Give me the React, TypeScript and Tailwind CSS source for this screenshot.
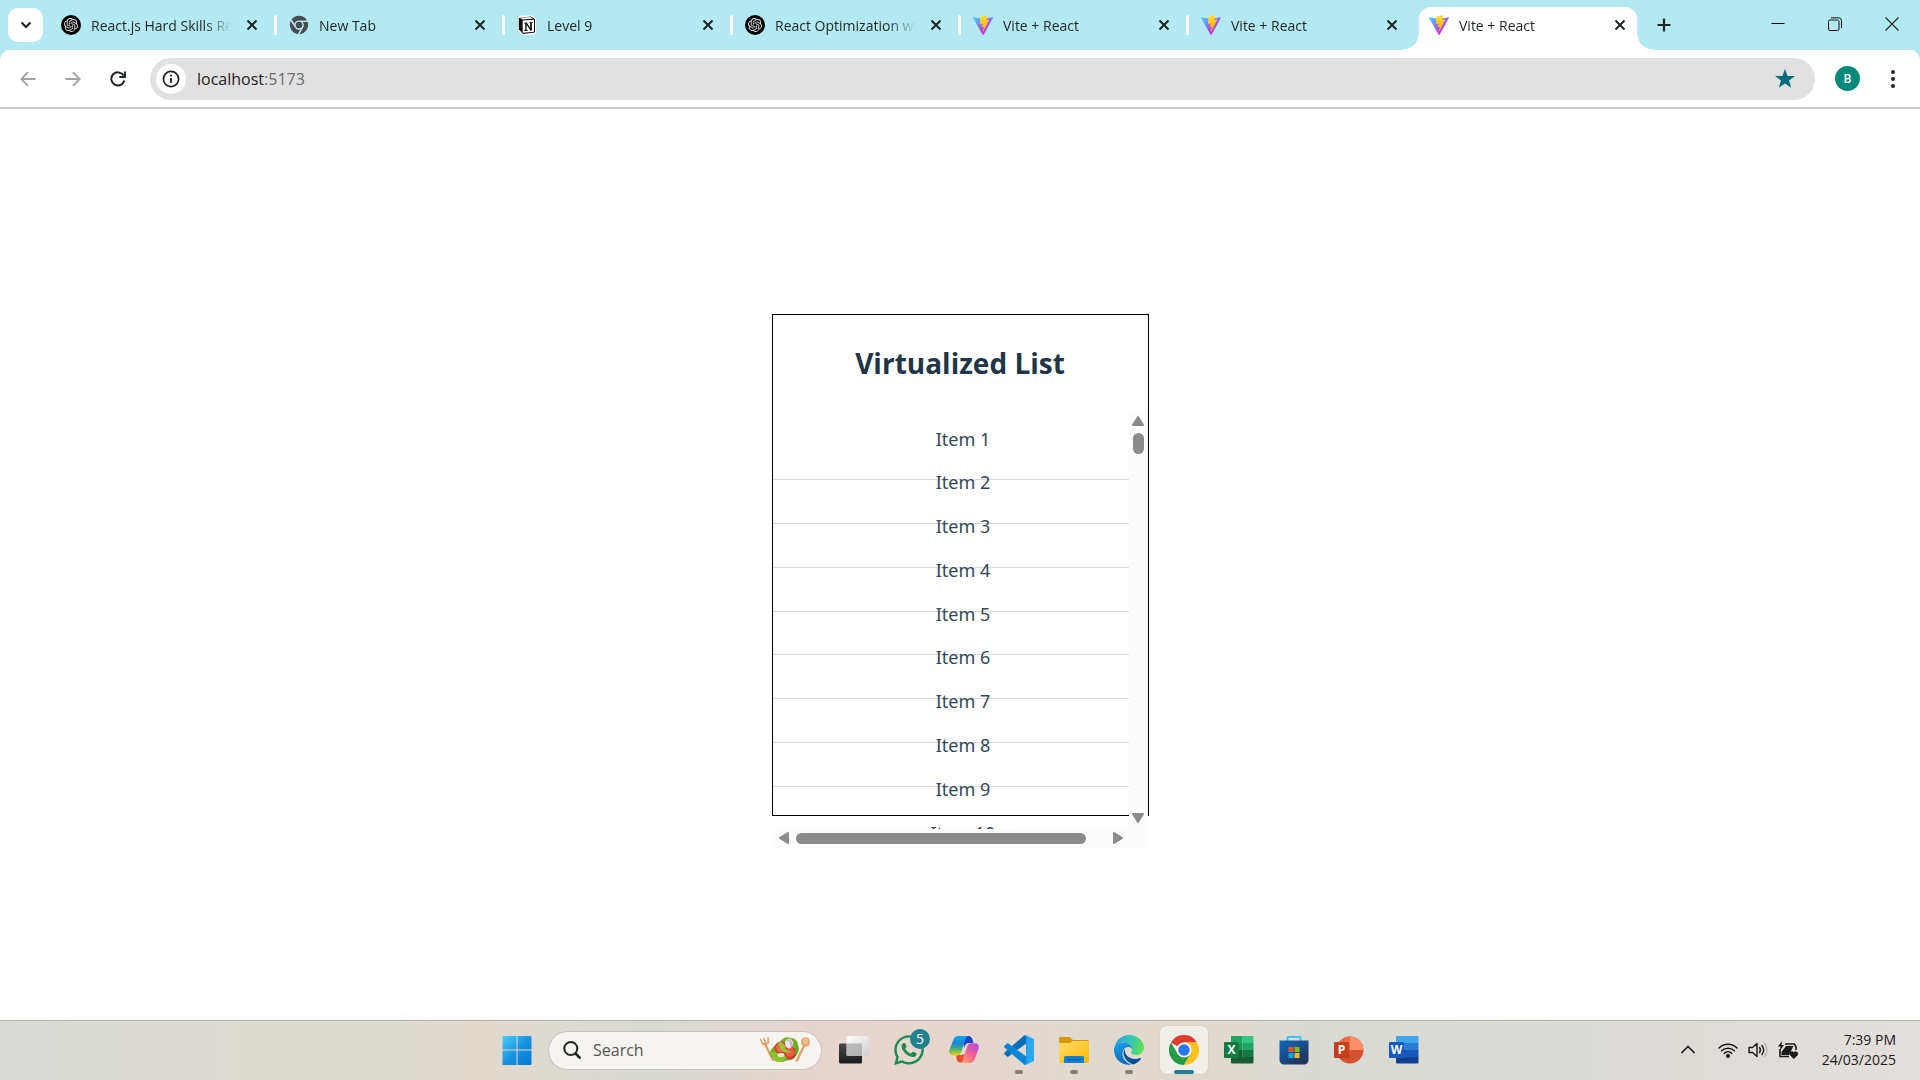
import React, { useId, type ReactNode } from "react";
import { SiOpenai } from "react-icons/si";
import { FaWhatsapp } from "react-icons/fa";

/* ---------- Favicons ---------- */

function ViteIcon() {
  const id = useId();
  return (
    <svg viewBox="0 0 256 257" className="size-5" aria-hidden="true">
      <defs>
        <linearGradient id={`${id}a`} x1="-.828%" x2="57.636%" y1="7.652%" y2="78.411%">
          <stop offset="0%" stopColor="#41D1FF" />
          <stop offset="100%" stopColor="#BD34FE" />
        </linearGradient>
        <linearGradient id={`${id}b`} x1="43.376%" x2="50.316%" y1="2.242%" y2="89.03%">
          <stop offset="0%" stopColor="#FFEA83" />
          <stop offset="8.333%" stopColor="#FFDD35" />
          <stop offset="100%" stopColor="#FFA800" />
        </linearGradient>
      </defs>
      <path
        fill={`url(#${id}a)`}
        d="M255.153 37.938L134.897 252.976c-2.483 4.44-8.862 4.466-11.382.048L.875 37.958c-2.746-4.814 1.371-10.646 6.827-9.67l120.385 21.517a6.537 6.537 0 0 0 2.322-.004l117.867-21.483c5.438-.991 9.574 4.796 6.877 9.62Z"
      />
      <path
        fill={`url(#${id}b)`}
        d="M185.432.063L96.44 17.501a3.268 3.268 0 0 0-2.634 3.014l-5.474 92.456a3.268 3.268 0 0 0 3.997 3.378l24.777-5.718c2.318-.535 4.413 1.507 3.936 3.838l-7.361 36.047c-.495 2.426 1.782 4.5 4.151 3.78l15.304-4.649c2.372-.72 4.652 1.36 4.15 3.788l-11.698 56.621c-.732 3.542 3.979 5.473 5.943 2.437l1.313-2.028l72.516-144.72c1.215-2.423-.88-5.186-3.54-4.672l-25.505 4.922c-2.396.462-4.435-1.77-3.759-4.114l16.646-57.705c.677-2.35-1.37-4.583-3.769-4.113Z"
      />
    </svg>
  );
}

function ChatIcon() {
  return (
    <span className="flex size-5 items-center justify-center rounded-full bg-black text-[#e4e4e4]">
      <SiOpenai className="size-3.5" aria-hidden="true" />
    </span>
  );
}

function ChromeGreyIcon() {
  return (
    <svg viewBox="0 0 20 20" className="size-5" aria-hidden="true">
      <g fill="#474c50">
        <circle cx="10" cy="10" r="3.3" />
        <path d="M2.6 4.3A9.2 9.2 0 0 1 18 5.4H10A4.7 4.7 0 0 0 5.5 8.8Z" />
        <path d="M1.7 6A9.2 9.2 0 0 0 8.8 19L11.3 14.6A4.7 4.7 0 0 1 5.9 12.4Z" />
        <path d="M18.6 7A9.2 9.2 0 0 1 10.5 19.2L14.2 12.4A4.7 4.7 0 0 0 13.6 7Z" />
      </g>
    </svg>
  );
}

function NotionIcon() {
  return (
    <svg viewBox="0 0 20 20" className="size-5" aria-hidden="true">
      <path d="M1 2.6 3 .8 14.5.2 19 3.4V18l-1.6 1.4L5.3 19.9 1 15.2Z" fill="#fff" />
      <path d="M1.8 3 13.6 1.6l4.4 2.5v13.5l-12 1.3-4.2-4.6Z" fill="#111" />
      <path d="M3.1 2.9 13.3 2.1l2.7 1.5-10.1.9Z" fill="#fff" />
      <path d="M5.7 5.6 17 4.7v12L5.7 17.8Z" fill="#fff" />
      <path d="M7.2 7.5h2.6l3.4 5.4V8.3l-1-.3v-.8h3.6V8l-.9.3v7.3l-1.4.1-3.9-6v5.1l1.1.3v.8H7.3V15l.9-.3V8.6l-1-.3Z" fill="#111" />
    </svg>
  );
}

/* ---------- Browser chrome ---------- */

type Tab = { title: string; icon: ReactNode; active?: boolean };

const tabs: Tab[] = [
  { title: "React.js Hard Skills Review", icon: <ChatIcon /> },
  { title: "New Tab", icon: <ChromeGreyIcon /> },
  { title: "Level 9", icon: <NotionIcon /> },
  { title: "React Optimization with lists", icon: <ChatIcon /> },
  { title: "Vite + React", icon: <ViteIcon /> },
  { title: "Vite + React", icon: <ViteIcon /> },
  { title: "Vite + React", icon: <ViteIcon />, active: true },
];

function BrowserTab({ tab, first }: { tab: Tab; first: boolean }) {
  return (
    <div className="relative flex min-w-0 max-w-[228px] flex-1 items-center pr-3">
      {tab.active && (
        <span className="absolute inset-x-[5px] top-[7px] bottom-0 rounded-t-xl bg-white before:absolute before:bottom-0 before:-left-4 before:size-4 before:bg-[radial-gradient(circle_at_0_0,transparent_15px,white_16px)] after:absolute after:-right-4 after:bottom-0 after:size-4 after:bg-[radial-gradient(circle_at_100%_0,transparent_15px,white_16px)]" />
      )}
      <span className={tab.active || first ? "h-5 w-[3px]" : "h-5 w-[3px] rounded-full bg-white"} />
      <button role="tab" aria-selected={!!tab.active} className="relative flex min-w-0 flex-1 items-center gap-2.5 pl-3 text-left">
        <span className="shrink-0">{tab.icon}</span>
        <span className="min-w-0 flex-1 overflow-hidden mask-r-from-80% pt-0.5 text-sm leading-5 whitespace-nowrap text-[#1f2426]">
          {tab.title}
        </span>
      </button>
      <button aria-label={`Close ${tab.title}`} className="relative ml-2.5 flex size-5 items-center justify-center">
        <svg viewBox="0 0 12 12" className="size-3" aria-hidden="true">
          <path d="M1.5 1.5 10.5 10.5M10.5 1.5 1.5 10.5" stroke="#1f2426" strokeWidth="2" />
        </svg>
      </button>
    </div>
  );
}

function TabStrip() {
  return (
    <div className="flex h-[50px]">
      <button aria-label="Search tabs" className="mt-2 mr-[3px] ml-2 flex h-[34px] w-[35px] shrink-0 items-center justify-center rounded-[10px] bg-white">
        <svg viewBox="0 0 12 8" className="h-2 w-3" fill="none" aria-hidden="true">
          <path d="m1.5 1.5 4.5 4.5 4.5-4.5" stroke="#1f2426" strokeWidth="2.2" />
        </svg>
      </button>
      <div role="tablist" className="flex min-w-0 flex-[0_1_1596px]">
        {tabs.map((tab, i) => (
          <BrowserTab key={i} tab={tab} first={i === 0} />
        ))}
      </div>
      <button aria-label="New tab" className="ml-[5px] flex w-[34px] items-center justify-center">
        <svg viewBox="0 0 14 14" className="size-3.5" aria-hidden="true">
          <path d="M7 .5v13M.5 7h13" stroke="#1f2426" strokeWidth="2.2" />
        </svg>
      </button>
      <div className="ml-auto flex shrink-0 pb-0.5">
        <button aria-label="Minimize" className="flex w-[57px] items-center justify-center">
          <svg viewBox="0 0 14 14" className="size-3.5" aria-hidden="true">
            <path d="M.5 6.5h13" stroke="#000" />
          </svg>
        </button>
        <button aria-label="Restore" className="flex w-[57px] items-center justify-center">
          <svg viewBox="0 0 14 14" className="size-3.5" fill="none" stroke="#111" aria-hidden="true">
            <rect x=".5" y="3" width="10.5" height="10.5" rx="1.5" />
            <path d="M3 .8h7.5a3 3 0 0 1 3 3V11" />
          </svg>
        </button>
        <button aria-label="Close window" className="flex w-[57px] items-center justify-center">
          <svg viewBox="0 0 14 14" className="size-3.5" aria-hidden="true">
            <path d="m.5.5 13 13m0-13-13 13" stroke="#222" strokeWidth="1.1" />
          </svg>
        </button>
      </div>
    </div>
  );
}

function Toolbar() {
  return (
    <div className="flex h-[59px] items-center rounded-t-[10px] border-b-2 border-[#cacaca] bg-white pl-2.5">
      <div className="mr-[15px] flex gap-2.5">
        <button aria-label="Back" className="flex size-[35px] items-center justify-center">
          <svg viewBox="0 0 16 16" className="size-4" fill="none" stroke="#a0a2a3" strokeWidth="1.8" aria-hidden="true">
            <path d="M15.5 8H1.5M8 1.2 1.3 8 8 14.8" />
          </svg>
        </button>
        <button aria-label="Forward" className="flex size-[35px] items-center justify-center">
          <svg viewBox="0 0 16 16" className="size-4" fill="none" stroke="#a0a2a3" strokeWidth="1.8" aria-hidden="true">
            <path d="M.5 8h14M8 1.2 14.7 8 8 14.8" />
          </svg>
        </button>
        <button aria-label="Reload" className="flex size-[35px] items-center justify-center">
          <svg viewBox="0 0 16 16" className="size-4" fill="none" stroke="#1f2426" strokeWidth="2" aria-hidden="true">
            <path d="M14.3 9.6A6.6 6.6 0 1 1 13.6 4.6" />
            <path d="M14.9.5v5.6H9.3" />
          </svg>
        </button>
      </div>
      <div className="flex h-[42px] min-w-0 flex-1 items-center rounded-full bg-[#e1e1e1] pr-5 pl-1.5">
        <button aria-label="View site information" className="flex size-[30px] shrink-0 items-center justify-center rounded-full bg-white">
          <svg viewBox="0 0 18 18" className="size-[18px]" aria-hidden="true">
            <circle cx="9" cy="9" r="7.6" fill="none" stroke="#1f2426" strokeWidth="1.7" />
            <path d="M9 8v5M9 4.8v1.8" stroke="#1f2426" strokeWidth="1.8" />
          </svg>
        </button>
        <span className="ml-[11px] flex-1 text-base leading-6 text-[#1f2022]">
          localhost<span className="text-[#6a6c6e]">:5173</span>
        </span>
        <button aria-label="Edit bookmark">
          <svg viewBox="0 0 20 19" className="h-[19px] w-5" aria-hidden="true">
            <path d="m10 0 2.5 6.9 7.5.2-6 4.5 2.2 7.2L10 14.6l-6.200 4.200L6 11.600 0 7.100l7.500-.2Z" fill="#006c7c" />
          </svg>
        </button>
      </div>
      <button aria-label="Profile B" className="ml-5 flex size-[25px] items-center justify-center rounded-full bg-[#00897b] font-['Roboto',sans-serif] text-xs font-medium text-white">
        B
      </button>
      <button aria-label="Menu" className="mr-2.5 ml-[15px] flex size-[35px] items-center justify-center">
        <svg viewBox="0 0 4 18" className="h-[18px] w-1" fill="#1f2426" aria-hidden="true">
          <circle cx="2" cy="2" r="2" />
          <circle cx="2" cy="9" r="2" />
          <circle cx="2" cy="16" r="2" />
        </svg>
      </button>
    </div>
  );
}

/* ---------- Page ---------- */

const items = Array.from({ length: 10 }, (_, i) => `Item ${i + 1}`);

function VirtualizedList() {
  return (
    <section className="h-[502px] w-[377px] border border-black">
      <h1 className="flex h-[95px] items-center justify-center pt-0.5 text-[28px] leading-9 font-bold text-[#213547]">Virtualized List</h1>
      <div className="grid grid-cols-[1fr_19px] grid-rows-[419px_19px]">
        <div className="overflow-hidden pt-[27px]">
          <ul className="grid h-[438px] auto-rows-fr text-center font-['Noto_Sans',sans-serif] text-lg text-[#34475a]">
            {items.map((item) => (
              <li key={item} className="border-b border-[#d9dadb] pl-[25px] leading-[4px]">
                {item}
              </li>
            ))}
          </ul>
        </div>
        <div className="flex flex-col items-center bg-[#fcfcfc] py-1.5">
          <svg viewBox="0 0 12 10" className="h-2.5 w-3" aria-hidden="true">
            <path d="M5 .7a1.200 1.200 0 0 1 2 0l4.800 7.800a1 1 0 0 1-.8 1.500H1a1 1 0 0 1-.8-1.500Z" fill="#8b8b8b" />
          </svg>
          <div className="mt-[7px] h-[21px] w-[11px] rounded-full bg-[#8b8b8b]" />
          <svg viewBox="0 0 12 10" className="mt-auto h-2.5 w-3" aria-hidden="true">
            <path d="M5 9.300a1.200 1.200 0 0 0 2 0l4.800-7.800A1 1 0 0 0 11 0H1a1 1 0 0 0-.8 1.500Z" fill="#8b8b8b" />
          </svg>
        </div>
        <div className="flex items-center bg-[#fcfcfc] px-1.5">
          <svg viewBox="0 0 10 12" className="h-3 w-2.5" aria-hidden="true">
            <path d="M.7 5a1.200 1.200 0 0 0 0 2l7.800 4.800A1 1 0 0 0 10 11V1A1 1 0 0 0 8.500.2Z" fill="#8b8b8b" />
          </svg>
          <div className="ml-[7px] h-[11px] w-[290px] rounded-full bg-[#8b8b8b]" />
          <svg viewBox="0 0 10 12" className="ml-auto h-3 w-2.5" aria-hidden="true">
            <path d="M9.300 5a1.200 1.200 0 0 1 0 2l-7.800 4.800A1 1 0 0 1 0 11V1A1 1 0 0 1 1.500.2Z" fill="#8b8b8b" />
          </svg>
        </div>
        <div className="bg-[#fcfcfc]" />
      </div>
    </section>
  );
}

/* ---------- Taskbar ---------- */

function WindowsIcon() {
  return (
    <svg viewBox="0 0 30 30" className="size-[30px]" aria-hidden="true">
      <defs>
        <linearGradient id="win" x1="0" y1="0" x2="30" y2="30" gradientUnits="userSpaceOnUse">
          <stop offset="0" stopColor="#4fd0ff" />
          <stop offset=".5" stopColor="#1a94e0" />
          <stop offset="1" stopColor="#0078d4" />
        </linearGradient>
      </defs>
      <path d="M1.500 1H14.500V14.500H.5V2a1 1 0 0 1 1-1ZM15.500 1H28.500a1 1 0 0 1 1 1V14.500H15.500ZM.5 15.500H14.500V30H1.500a1 1 0 0 1-1-1ZM15.500 15.500H29.500V29a1 1 0 0 1-1 1H15.500Z" fill="url(#win)" />
    </svg>
  );
}

function SaladIcon() {
  return (
    <svg viewBox="0 0 52 28" className="h-7 w-[52px]" aria-hidden="true">
      <g stroke="#dda26c" strokeLinecap="round" fill="none">
        <path d="m6 8 8 16" strokeWidth="2.400" />
        <path d="M1.500 3.500 4 8.500M5 2.500l1.500 5M9 2l.5 5" strokeWidth="1.600" />
        <path d="m45 10-7 14.500" strokeWidth="2.400" />
      </g>
      <path d="M1.500 5.500c2 5 8 5 8 0L8 6.500 4.500 7Z" fill="#dda26c" />
      <ellipse cx="46.500" cy="6" rx="4.500" ry="4.800" fill="#e2aa74" />
      <ellipse cx="47" cy="5" rx="2.600" ry="2.800" fill="#eabf92" />
      <path d="M11 16c2-5 6-8 10-10 2-4 7-6 11-4 4 0 7 3 7 7 2 4 0 9-3 12-3 4-7 3-10 4-4 2-7 1-9-2-4-1-7-3-6-7Z" fill="#77ae25" />
      <circle cx="22" cy="12" r="6.500" fill="#d93f2c" />
      <circle cx="22" cy="11.500" r="4.800" fill="#f0684d" />
      <circle cx="31" cy="17" r="6.500" fill="#d33a29" />
      <circle cx="31" cy="16" r="4.600" fill="#ee5f45" />
      <path d="M20 6c3 0 5 2 6 5s3 5 7 4c-4 3-9 2-11-2s-3-5-2-7Z" fill="#96c93a" />
      <path d="M11 16c4-1 7 1 9 3s6 2 8 1c-2 4-5 6-9 6-3 0-4-2-5-4s-3-3-3-6Z" fill="#8cc230" />
      <ellipse cx="30" cy="7.500" rx="4" ry="5" fill="#efe4ef" />
      <path d="M28 4c3 0 4 3 4 7M30 3c2 2 3 4 3 7" stroke="#b78fb8" strokeWidth=".8" fill="none" />
      <path d="M36 6c3 3 4 9 1 14-2-2-1-5 0-7s0-5-1-7Z" fill="#6aa51d" />
      <ellipse cx="22" cy="19" rx="3.500" ry="2" fill="#e6efc5" />
    </svg>
  );
}

function TaskViewIcon() {
  return (
    <svg viewBox="0 0 30 30" className="size-[30px]" aria-hidden="true">
      <defs>
        <linearGradient id="tvd" x1="0" y1="0" x2="0" y2="1">
          <stop offset="0" stopColor="#484848" />
          <stop offset="1" stopColor="#1b1b1b" />
        </linearGradient>
        <linearGradient id="tvl" x1="0" y1="0" x2="1" y2="1">
          <stop offset="0" stopColor="#fff" />
          <stop offset="1" stopColor="#cfcfcf" />
        </linearGradient>
      </defs>
      <rect x="0" y="8.500" width="23" height="20" rx="1.500" fill="url(#tvd)" />
      <rect x="7.500" y="1" width="22.500" height="20" rx="1.500" fill="url(#tvl)" opacity=".95" />
      <path d="M7.500 8.500H23V21H9a1.500 1.500 0 0 1-1.500-1.500Z" fill="#a5a5a5" opacity=".7" />
    </svg>
  );
}

function CopilotIcon() {
  return (
    <svg viewBox="0 0 30 30" className="size-[30px]" aria-hidden="true">
      <defs>
        <linearGradient id="cpa" x1="0" y1="0" x2="0" y2="1">
          <stop offset="0" stopColor="#15a5ee" />
          <stop offset=".4" stopColor="#1785d8" />
          <stop offset=".7" stopColor="#59b463" />
          <stop offset="1" stopColor="#f2cf14" />
        </linearGradient>
        <linearGradient id="cpb" x1="1" y1="0" x2=".2" y2="1">
          <stop offset="0" stopColor="#a64ff0" />
          <stop offset=".5" stopColor="#ee5c98" />
          <stop offset="1" stopColor="#ffa268" />
        </linearGradient>
      </defs>
      <path d="M14 1h5.500a4 4 0 0 1 3.700 2.700L24.500 8H20c-3 0-4 2-5 5Z" fill="#1946cc" />
      <path d="M7 20h5l4-1-2 8.500h-2.500a4 4 0 0 1-3.800-2.800Z" fill="#ee4d2f" />
      <path d="M9.500 1H20c-2 0-3 1.500-3.700 3.500l-4 12.500c-.8 2.500-2 3.500-4.500 3.500H4c-3 0-4.500-2.500-3.700-5.500L4.500 4.500C5.300 2 7 1 9.500 1Z" fill="url(#cpa)" />
      <path d="M20.500 28H10.500c2 0 2.800-1.500 3.500-3.500L18 12c.8-2.500 2-3.800 4.500-3.800H26c3 0 4.500 2.300 3.700 5.300l-4.200 11C24.700 27 23 28 20.500 28Z" fill="url(#cpb)" />
    </svg>
  );
}

function VsCodeIcon() {
  return (
    <svg viewBox="0 0 30 30" className="size-[30px]" aria-hidden="true">
      <path d="M22 .3 29 3.500a1.800 1.800 0 0 1 1 1.600v19.800a1.800 1.800 0 0 1-1 1.600L22 29.700Z" fill="#2aa7f2" />
      <path d="M22 .3 22.500 8.300 4.500 21.500a1.200 1.200 0 0 1-1.500 0L.5 19.200a1.200 1.200 0 0 1 0-1.800L19.800.8Z" fill="#0a6fb8" />
      <path d="m22 29.700.5-8L4.500 8.500a1.200 1.200 0 0 0-1.500 0L.5 10.800a1.200 1.200 0 0 0 0 1.800L19.800 29.200Z" fill="#0c85d6" />
      <path d="M19.500.8C20.700-.3 22 .3 22 .3V29.700s-1.500.6-2.600-.5L22.500 28V2Z" fill="#1a96e6" />
    </svg>
  );
}

function FolderIcon() {
  return (
    <svg viewBox="0 0 30 30" className="size-[30px]" aria-hidden="true">
      <defs>
        <linearGradient id="fld" x1="0" y1="0" x2="1" y2="1">
          <stop offset="0" stopColor="#ffdc6b" />
          <stop offset="1" stopColor="#ffb900" />
        </linearGradient>
      </defs>
      <path d="M0 3.500A1.500 1.500 0 0 1 1.500 2H10c1 0 1.500.5 2 1.200L14 5H28.500A1.500 1.500 0 0 1 30 6.500V12H0Z" fill="#d69a0a" />
      <path d="M0 8h11l2.500-2H28.500A1.500 1.500 0 0 1 30 7.500v19a1.500 1.500 0 0 1-1.500 1.500h-27A1.500 1.500 0 0 1 0 26.500Z" fill="url(#fld)" />
      <path d="M5 28v-5.500A1.500 1.500 0 0 1 6.500 21h17a1.500 1.500 0 0 1 1.500 1.500V28Z" fill="#0f80d3" />
      <path d="M8 24.500h14" stroke="#0b5ea8" strokeWidth="1.500" />
    </svg>
  );
}

function EdgeIcon() {
  return (
    <svg viewBox="0 0 30 30" className="size-[30px]" aria-hidden="true">
      <defs>
        <linearGradient id="ega" x1="0" y1=".3" x2="1" y2=".5">
          <stop offset="0" stopColor="#2aa5e4" />
          <stop offset=".55" stopColor="#34c9b0" />
          <stop offset="1" stopColor="#62e052" />
        </linearGradient>
        <linearGradient id="egb" x1="0" y1="0" x2=".4" y2="1">
          <stop offset="0" stopColor="#1aa0e8" />
          <stop offset="1" stopColor="#0b6bbd" />
        </linearGradient>
      </defs>
      <path d="M.4 13C1.500 5.500 7.500 0 15 0c8.500 0 15 6 15 12.500 0 4.500-3.500 7.500-7.500 7.500-3.500 0-5.500-1.500-5.500-2.500s1-1.500 1-3.500c0-3-3-6.500-8-6.500S1.500 10 .4 13Z" fill="url(#ega)" />
      <path d="M0 15C0 10.500 4 7.500 9.500 7.500c5 0 8.500 3 8.500 6.500-1-1.500-2.500-2-4-2-3 0-5.500 3-5.500 7 0 5 4 9 8.500 10.500C8 31 0 24 0 15Z" fill="url(#egb)" />
      <path d="M10.500 14C8 18 10 26 19 29.500c3-.7 6-2.800 7.800-5.500.5-.8-.2-1.300-1-1C20 25.500 12 23 11 16.500Z" fill="#0c4f9a" />
    </svg>
  );
}

function ChromeIcon() {
  return (
    <svg viewBox="0 0 30 30" className="size-[30px]" aria-hidden="true">
      <path d="M15 15 2 7.500A15 15 0 0 1 28 7.500L15 7.500Z" fill="#e33b2e" />
      <path d="M2 7.500a15 15 0 0 0 13 22.500L21.500 18.700 15 15 8.500 18.700Z" fill="#249a48" />
      <path d="M28 7.500A15 15 0 0 1 15 30L21.500 18.700 15 15V7.500Z" fill="#fcc31e" />
      <circle cx="15" cy="15" r="7.500" fill="#fff" />
      <circle cx="15" cy="15" r="5.800" fill="#2a78ee" />
    </svg>
  );
}

function StoreIcon() {
  return (
    <svg viewBox="0 0 30 30" className="size-[30px]" aria-hidden="true">
      <defs>
        <linearGradient id="sto" x1="0" y1="0" x2=".8" y2="1">
          <stop offset="0" stopColor="#0a6cbd" />
          <stop offset="1" stopColor="#242f58" />
        </linearGradient>
      </defs>
      <path d="M8.500 6V2.800A1 1 0 0 1 9.500 1.800h11a1 1 0 0 1 1 1V6" fill="none" stroke="#28c4f5" strokeWidth="1.800" />
      <path d="M.5 5.500h29V25a4.500 4.500 0 0 1-4.500 4.500H5A4.500 4.500 0 0 1 .5 25Z" fill="url(#sto)" />
      <path d="M9.500 12H14.500V17H9.500Z" fill="#f3502a" />
      <path d="M15.500 12H20.500V17H15.500Z" fill="#80ba03" />
      <path d="M9.500 18H14.500V23H9.500Z" fill="#08a4ef" />
      <path d="M15.500 18H20.500V23H15.500Z" fill="#feb902" />
    </svg>
  );
}

function OfficeLetter({ letter, className }: { letter: string; className: string }) {
  return (
    <span className={`absolute top-[7px] left-0 flex h-4 w-[15px] items-center justify-center rounded-[1px] text-xs leading-none font-bold text-white ${className}`}>
      {letter}
    </span>
  );
}

function ExcelIcon() {
  return (
    <span className="relative block size-[30px]">
      <svg viewBox="0 0 30 30" className="size-[30px]" aria-hidden="true">
        <path d="M7 1h11.500v7.500H7Z" fill="#21a366" />
        <path d="M18.500 1H28.500a1 1 0 0 1 1 1v6.500h-11Z" fill="#33c481" />
        <path d="M7 8h11.500v7H7Z" fill="#189a59" />
        <path d="M18.500 8h11v7h-11Z" fill="#21a366" />
        <path d="M7 15h11.500v7H7Z" fill="#155f36" />
        <path d="M18.500 15h11v7h-11Z" fill="#107c41" />
        <path d="M7 22h22.500v5.500a1 1 0 0 1-1 1H8a1 1 0 0 1-1-1Z" fill="#185c37" />
      </svg>
      <OfficeLetter letter="X" className="bg-[#107c41]" />
    </span>
  );
}

function PowerPointIcon() {
  return (
    <span className="relative block size-[30px]">
      <svg viewBox="0 0 30 30" className="size-[30px]" aria-hidden="true">
        <circle cx="16" cy="15" r="13.500" fill="#d35230" />
        <path d="M2.500 15A13.500 13.500 0 0 1 16 1.500V15Z" fill="#ed6c47" />
        <path d="M16 1.500A13.500 13.500 0 0 1 29.500 15H16Z" fill="#ff8f6b" />
      </svg>
      <OfficeLetter letter="P" className="bg-[#c43e1c]" />
    </span>
  );
}

function WordIcon() {
  return (
    <span className="relative block size-[30px]">
      <svg viewBox="0 0 30 30" className="size-[30px]" aria-hidden="true">
        <path d="M8 1h20.500a1 1 0 0 1 1 1v6H7V2a1 1 0 0 1 1-1Z" fill="#41a5ee" />
        <path d="M7 8h22.500v7H7Z" fill="#2b7cd3" />
        <path d="M7 15h22.500v7H7Z" fill="#185abd" />
        <path d="M7 22h22.500v5.500a1 1 0 0 1-1 1H8a1 1 0 0 1-1-1Z" fill="#103f91" />
      </svg>
      <OfficeLetter letter="W" className="bg-[#185abd]" />
    </span>
  );
}

function WhatsAppIcon() {
  return (
    <span className="relative block">
      <FaWhatsapp className="size-[34px] text-[#1b8a53]" aria-hidden="true" />
      <span className="absolute -top-1 -right-1 flex size-5 items-center justify-center rounded-full bg-[#24808f] text-sm leading-none text-white">5</span>
    </span>
  );
}

type TaskbarApp = { name: string; icon: ReactNode; state?: "running" | "active" };

const apps: TaskbarApp[] = [
  { name: "Task view", icon: <TaskViewIcon /> },
  { name: "WhatsApp", icon: <WhatsAppIcon /> },
  { name: "Copilot", icon: <CopilotIcon /> },
  { name: "Visual Studio Code", icon: <VsCodeIcon />, state: "running" },
  { name: "File Explorer", icon: <FolderIcon />, state: "running" },
  { name: "Microsoft Edge", icon: <EdgeIcon />, state: "running" },
  { name: "Google Chrome", icon: <ChromeIcon />, state: "active" },
  { name: "Excel", icon: <ExcelIcon /> },
  { name: "Microsoft Store", icon: <StoreIcon /> },
  { name: "PowerPoint", icon: <PowerPointIcon /> },
  { name: "Word", icon: <WordIcon /> },
];

function AppButton({ app }: { app: TaskbarApp }) {
  return (
    <button
      aria-label={app.name}
      className={
        app.state === "active"
          ? "relative flex size-12 items-center justify-center rounded-md bg-[#f1efea] shadow-[0_0_1px_#00000040]"
          : "relative flex size-12 items-center justify-center"
      }
    >
      {app.icon}
      {app.state === "active" && <span className="absolute bottom-0 h-1 w-5 rounded-full bg-[#24808f]" />}
      {app.state === "running" && <span className="absolute bottom-0 h-1 w-2 rounded-full bg-[#85807b]" />}
    </button>
  );
}

function Taskbar() {
  return (
    <footer className="grid h-[60px] grid-cols-[1fr_auto_1fr] items-center border-t border-[#aeaea8] bg-[linear-gradient(90deg,#d9dad6_0%,#dedbd3_12%,#dddad2_21%,#e2d8cd_25%,#dedad1_28%,#d8d9d3_34%,#e6d5cf_42%,#e6d6d0_50%,#e1dad0_56%,#e2d9ce_62%,#dadad4_68%,#dadbd6_80%,#e0dcd8_89%,#e2dedb_100%)] pb-px">
      <div className="col-start-2 flex items-center gap-[7px] pl-px">
        <button aria-label="Start" className="flex size-12 items-center justify-center">
          <WindowsIcon />
        </button>
        <label className="mr-px flex h-[39px] w-[274px] items-center rounded-full border border-[#c4c0ba] bg-[#f6f4f1] pr-2.5 pl-3.5">
          <svg viewBox="0 0 18 18" className="size-[18px] shrink-0" fill="none" stroke="#222" aria-hidden="true">
            <circle cx="7.800" cy="7.500" r="6.500" strokeWidth="2" />
            <path d="m12.500 12.500 5 5" strokeWidth="2.600" />
          </svg>
          <input type="text" aria-label="Search" placeholder="Search" className="ml-3 min-w-0 flex-1 bg-transparent text-base leading-6 outline-none placeholder:text-[#555452]" />
          <SaladIcon />
        </label>
        {apps.map((app) => (
          <AppButton key={app.name} app={app} />
        ))}
      </div>
      <div className="flex items-center justify-end pr-6 text-[#1a1a1a]">
        <button aria-label="Show hidden icons" className="mr-5">
          <svg viewBox="0 0 20 20" className="size-5" fill="none" aria-hidden="true">
            <path d="m3.500 13 6.500-6.500 6.500 6.500" stroke="#1a1a1a" strokeWidth="1.700" />
          </svg>
        </button>
        <button aria-label="Network, volume and battery" className="mr-6 flex items-center gap-2.5">
          <svg viewBox="0 0 20 16" className="h-4 w-5" fill="none" stroke="#1a1a1a" strokeWidth="1.500" strokeLinecap="round" aria-hidden="true">
            <path d="M1 6a12.500 12.500 0 0 1 18 0M3.600 8.800a9 9 0 0 1 12.800 0M6.300 11.400a5.200 5.200 0 0 1 7.400 0" />
            <circle cx="10" cy="14" r="1.300" fill="#1a1a1a" />
          </svg>
          <svg viewBox="0 0 20 16" className="h-4 w-5" fill="none" stroke="#1a1a1a" strokeWidth="1.400" strokeLinejoin="round" strokeLinecap="round" aria-hidden="true">
            <path d="M1 5.500h3.500L9 1.500v13L4.500 10.500H1Z" />
            <path d="M11.500 5.500a4 4 0 0 1 0 5M14 3.500a7.500 7.500 0 0 1 0 9" />
            <path d="M16.500 1.500a10 10 0 0 1 0 13" stroke="#b5b2af" />
          </svg>
          <svg viewBox="0 0 20 18" className="h-[18px] w-5" aria-hidden="true">
            <path d="M7 3h9.500l1.500 3v3M2 8v7.500h9" fill="none" stroke="#1a1a1a" strokeWidth="1.600" />
            <path d="M8 5h7.500l-4.500 9H3.500V11Z" fill="#1a1a1a" />
            <path d="M4 0 0 5.500h2.500L2 9.500 6 4H3.500Z" fill="#1a1a1a" />
            <path d="M15.800 18 12 14.200a2.200 2.200 0 0 1 3.800-2.800 2.200 2.200 0 0 1 3.800 2.800Z" fill="#1a1a1a" />
          </svg>
        </button>
        <button aria-label="Clock" className="text-right text-sm leading-5">
          <span className="block">7:39 PM</span>
          <span className="block">24/03/2025</span>
        </button>
      </div>
    </footer>
  );
}

export default function App() {
  return (
    <div className="flex min-h-screen flex-col bg-[#b4e8f3] font-['Open_Sans',sans-serif]">
      <header>
        <TabStrip />
        <Toolbar />
      </header>
      <main className="flex flex-1 items-center justify-center bg-white">
        <VirtualizedList />
      </main>
      <Taskbar />
    </div>
  );
}
